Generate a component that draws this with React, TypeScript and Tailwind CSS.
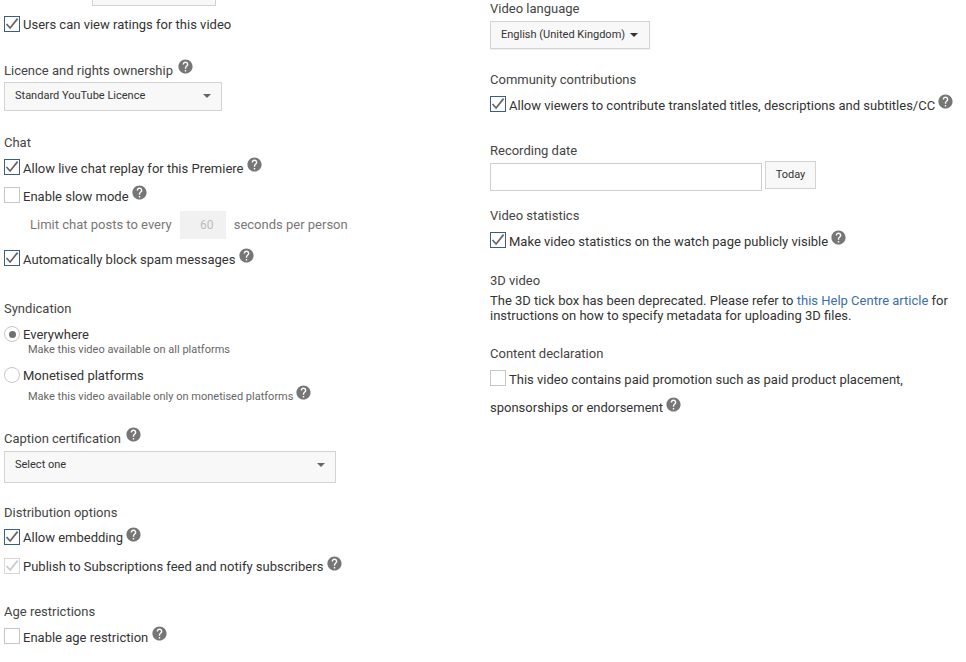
import React from "react";
import { MdHelp } from "react-icons/md";

function Help({ className = "mb-[5px] ml-[3px]" }: { className?: string }) {
  return <MdHelp size={17} className={`shrink-0 text-[#767676] ${className}`} />;
}

function Heading({ children, help, className = "" }: { children: React.ReactNode; help?: boolean; className?: string }) {
  return (
    <div className={`flex h-4 items-center text-[13px] leading-4 text-[#444] ${className}`}>
      <span className="mt-[2px]">{children}</span>
      {help && <Help className="mb-[7px] ml-1" />}
    </div>
  );
}

function CheckBox({ checked, disabled }: { checked?: boolean; disabled?: boolean }) {
  const border = disabled ? "border-[#d8d8d8]" : checked ? "border-[#3a5f85]" : "border-[#c6c6c6]";
  return (
    <span className={`flex size-4 shrink-0 items-center justify-center border bg-white ${border}`}>
      {checked && (
        <svg viewBox="0 0 16 16" className="size-4 overflow-visible" fill="none">
          <path d="M2.5 8l3.6 4L13.6 2.6" stroke={disabled ? "#c9c9c9" : "#666"} strokeWidth="1.7" />
        </svg>
      )}
    </span>
  );
}

interface CheckRowProps {
  label: string;
  checked?: boolean;
  disabled?: boolean;
  help?: boolean;
  low?: boolean;
  helpClass?: string;
  className?: string;
}

function CheckRow({ label, checked, disabled, help, low, helpClass, className = "" }: CheckRowProps) {
  return (
    <div className={`flex h-4 items-center text-[13px] text-[#333] ${className}`}>
      <CheckBox checked={checked} disabled={disabled} />
      <span className={`ml-[3px] whitespace-nowrap ${low ? "mt-1" : "mt-[2px]"}`}>{label}</span>
      {help && <Help className={helpClass} />}
    </div>
  );
}

function Radio({ label, selected, className = "" }: { label: string; selected?: boolean; className?: string }) {
  return (
    <div className={`flex h-4 items-center text-[13px] text-[#333] ${className}`}>
      <span className="flex size-4 shrink-0 items-center justify-center rounded-full border border-[#c6c6c6] bg-white">
        {selected && <span className="size-[7px] rounded-full bg-[#707070]" />}
      </span>
      <span className="mt-[2px] ml-[3px]">{label}</span>
    </div>
  );
}

function SelectBox({ label, className = "" }: { label: string; className?: string }) {
  return (
    <div className={`flex items-start justify-between border border-[#d3d3d3] bg-[#f8f8f8] pt-[5px] pr-[10px] pl-[10px] text-[11px] leading-4 text-[#333] ${className}`}>
      <span>{label}</span>
      <span className="mt-[6px] h-0 w-0 border-x-[4px] border-t-[4px] border-x-transparent border-t-[#666]" />
    </div>
  );
}

export default function App() {
  return (
    <div className="flex h-[662px] w-[966px] overflow-hidden bg-white font-['Roboto',sans-serif]">
      {/* left column */}
      <div className="w-[490px] shrink-0 pl-1">
        <div className="ml-[88px] h-[6px] w-[124px] border-x border-b border-[#d3d3d3] bg-[#f8f8f8]" />
        <CheckRow label="Users can view ratings for this video" checked className="mt-[10px]" />

        <Heading help className="mt-[30px]">Licence and rights ownership</Heading>
        <SelectBox label="Standard YouTube Licence" className="mt-1 h-[29px] w-[218px]" />

        <Heading className="mt-[23px]">Chat</Heading>
        <CheckRow label="Allow live chat replay for this Premiere" checked help low className="mt-[9px]" />
        <CheckRow label="Enable slow mode" help low helpClass="mb-[5px] ml-[2px]" className="mt-3" />
        <div className="mt-2 flex h-7 items-center pl-[26px] text-[13px] text-[#777]">
          <span>Limit chat posts to every</span>
          <span className="ml-2 flex h-7 w-[46px] items-center justify-center bg-[#f1f1f1] pl-2 text-xs text-[#bbb]">60</span>
          <span className="ml-2">seconds per person</span>
        </div>
        <CheckRow label="Automatically block spam messages" checked help low className="mt-[11px]" />

        <Heading className="mt-[34px]">Syndication</Heading>
        <Radio label="Everywhere" selected className="mt-[10px]" />
        <div className="h-[14px] pt-px pl-6 text-[11px] leading-[14px] text-[#666]">Make this video available on all platforms</div>
        <Radio label="Monetised platforms" className="mt-[11px]" />
        <div className="mt-[6px] flex h-[14px] items-center pl-6 text-[11px] leading-[14px] text-[#666]">
          <span className="mt-[2px]">Make this video available only on monetised platforms</span>
          <Help className="mb-[7px] ml-[2px]" />
        </div>

        <Heading help className="mt-[27px]">Caption certification</Heading>
        <SelectBox label="Select one" className="mt-[5px] h-8 w-[332px]" />

        <Heading className="mt-[21px]">Distribution options</Heading>
        <CheckRow label="Allow embedding" checked help helpClass="mb-[5px] ml-[2px]" className="mt-[9px]" />
        <CheckRow label="Publish to Subscriptions feed and notify subscribers" checked disabled help className="mt-[13px]" />

        <Heading className="mt-[29px]">Age restrictions</Heading>
        <CheckRow label="Enable age restriction" help low className="mt-[9px]" />
      </div>

      {/* right column */}
      <div className="flex-1">
        <Heading>Video language</Heading>
        <div className="mt-[5px] flex h-7 w-40 items-center gap-[5px] border border-[#d3d3d3] bg-[#f8f8f8] pl-[10px] text-[11px] text-[#333] shadow-[0_1px_0_rgba(0,0,0,0.05)]">
          <span>English (United Kingdom)</span>
          <span className="h-0 w-0 border-x-[4px] border-t-[4px] border-x-transparent border-t-[#333]" />
        </div>

        <Heading className="mt-[22px]">Community contributions</Heading>
        <CheckRow label="Allow viewers to contribute translated titles, descriptions and subtitles/CC" checked help low helpClass="mb-[5px] ml-[2px]" className="mt-[9px]" />

        <Heading className="mt-[30px]">Recording date</Heading>
        <div className="mt-[3px] flex items-start">
          <div className="mt-[2px] h-7 w-[272px] border border-[#cfcfcf] bg-white" />
          <div className="ml-[3px] flex h-7 w-[51px] items-center justify-center border border-[#d3d3d3] bg-[#f8f8f8] text-[11px] text-[#333]">Today</div>
        </div>

        <Heading className="mt-4">Video statistics</Heading>
        <CheckRow label="Make video statistics on the watch page publicly visible" checked help low helpClass="mb-[5px] ml-[2px]" className="mt-[9px]" />

        <Heading className="mt-6">3D video</Heading>
        <p className="mt-[5px] w-[470px] text-[13px] leading-[15px] text-[#333]">
          The 3D tick box has been deprecated. Please refer to <span className="text-[#3a6ea8]">this Help Centre article</span> for instructions on how to specify metadata for uploading 3D files.
        </p>

        <Heading className="mt-[22px]">Content declaration</Heading>
        <CheckRow label="This video contains paid promotion such as paid product placement," low className="mt-[9px]" />
        <div className="mt-[13px] flex h-4 items-center text-[13px] text-[#333]">
          <span className="mt-[2px]">sponsorships or endorsement</span>
          <Help className="mb-[5px] ml-[2px]" />
        </div>
      </div>
    </div>
  );
}
